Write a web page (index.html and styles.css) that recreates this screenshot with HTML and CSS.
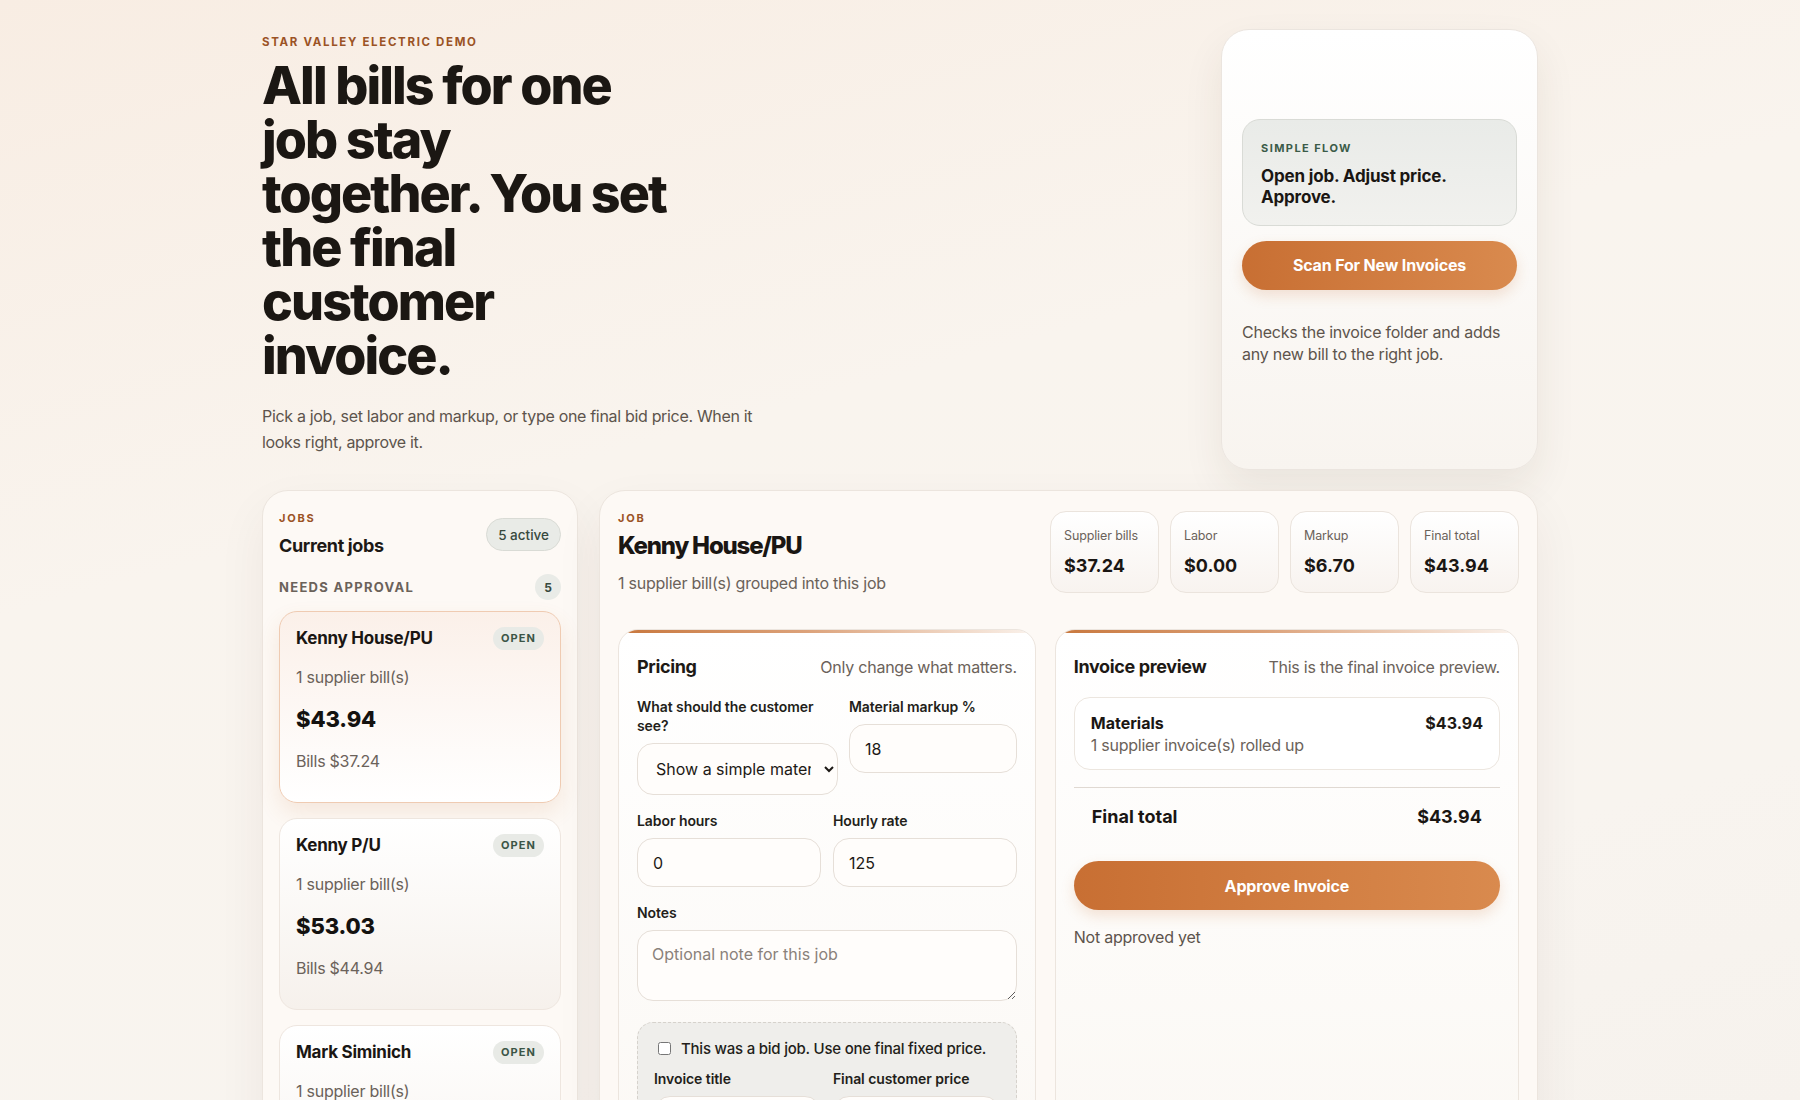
FILE: index.html
```html
<!DOCTYPE html>
<html lang="en">
<head>
<meta charset="utf-8">
<title>Star Valley Electric Demo</title>
<link rel="stylesheet" href="styles.css">
</head>
<body>
<div class="page">
  <header class="hero">
    <div class="hero-copy">
      <div class="kicker">Star Valley Electric Demo</div>
      <h1 class="headline">All bills for one<br>job stay<br>together. You set<br>the final<br>customer<br>invoice.</h1>
      <p class="lead">Pick a job, set labor and markup, or type one final bid price. When it looks right, approve it.</p>
    </div>
    <aside class="flow-card">
      <div class="flow-box">
        <div class="flow-label">Simple flow</div>
        <div class="flow-text">Open job. Adjust price. Approve.</div>
      </div>
      <button class="btn">Scan For New Invoices</button>
      <p class="flow-desc">Checks the invoice folder and adds any new bill to the right job.</p>
    </aside>
  </header>

  <main class="main">
    <section class="panel jobs">
      <div class="jobs-head">
        <div>
          <div class="eyebrow">Jobs</div>
          <div class="panel-title">Current jobs</div>
        </div>
        <span class="pill">5 active</span>
      </div>
      <div class="group-row">
        <span class="group-label">Needs approval</span>
        <span class="count">5</span>
      </div>
      <div class="job-list">
        <div class="job-card selected">
          <div class="job-top"><span class="job-name">Kenny House/PU</span><span class="status">Open</span></div>
          <div class="job-sub">1 supplier bill(s)</div>
          <div class="job-price">$43.94</div>
          <div class="job-sub">Bills $37.24</div>
        </div>
        <div class="job-card">
          <div class="job-top"><span class="job-name">Kenny P/U</span><span class="status">Open</span></div>
          <div class="job-sub">1 supplier bill(s)</div>
          <div class="job-price">$53.03</div>
          <div class="job-sub">Bills $44.94</div>
        </div>
        <div class="job-card">
          <div class="job-top"><span class="job-name">Mark Siminich</span><span class="status">Open</span></div>
          <div class="job-sub">1 supplier bill(s)</div>
          <div class="job-price">$38.10</div>
          <div class="job-sub">Bills $32.29</div>
        </div>
      </div>
    </section>

    <section class="panel detail">
      <div class="detail-head">
        <div>
          <div class="eyebrow">Job</div>
          <h2 class="job-title">Kenny House/PU</h2>
          <div class="job-meta">1 supplier bill(s) grouped into this job</div>
        </div>
        <div class="stats">
          <div class="stat"><div class="stat-label">Supplier bills</div><div class="stat-value">$37.24</div></div>
          <div class="stat"><div class="stat-label">Labor</div><div class="stat-value">$0.00</div></div>
          <div class="stat"><div class="stat-label">Markup</div><div class="stat-value">$6.70</div></div>
          <div class="stat"><div class="stat-label">Final total</div><div class="stat-value">$43.94</div></div>
        </div>
      </div>

      <div class="cards">
        <div class="card">
          <div class="card-head"><span class="card-title">Pricing</span><span class="card-note">Only change what matters.</span></div>
          <div class="row row-first">
            <label class="field-group">
              <span class="field-label">What should the customer see?</span>
              <select class="field select"><option>Show a simple materials line</option></select>
            </label>
            <label class="field-group">
              <span class="field-label">Material markup %</span>
              <input class="field" type="text" value="18">
            </label>
          </div>
          <div class="row row-two">
            <label class="field-group">
              <span class="field-label">Labor hours</span>
              <input class="field" type="text" value="0">
            </label>
            <label class="field-group">
              <span class="field-label">Hourly rate</span>
              <input class="field" type="text" value="125">
            </label>
          </div>
          <label class="field-group notes">
            <span class="field-label">Notes</span>
            <textarea class="field area" placeholder="Optional note for this job"></textarea>
          </label>
          <div class="bid-box">
            <label class="check-row"><input type="checkbox"> <span>This was a bid job. Use one final fixed price.</span></label>
            <div class="row row-two bid-row">
              <label class="field-group">
                <span class="field-label">Invoice title</span>
                <input class="field" type="text">
              </label>
              <label class="field-group">
                <span class="field-label">Final customer price</span>
                <input class="field" type="text">
              </label>
            </div>
          </div>
        </div>

        <div class="card">
          <div class="card-head"><span class="card-title">Invoice preview</span><span class="card-note">This is the final invoice preview.</span></div>
          <div class="line-item">
            <div>
              <div class="line-name">Materials</div>
              <div class="line-sub">1 supplier invoice(s) rolled up</div>
            </div>
            <div class="line-amount">$43.94</div>
          </div>
          <div class="total-row"><span>Final total</span><span>$43.94</span></div>
          <button class="btn approve">Approve Invoice</button>
          <div class="status-note">Not approved yet</div>
        </div>
      </div>
    </section>
  </main>
</div>
</body>
</html>
```

FILE: styles.css
```css
* { box-sizing: border-box; }

html, body { margin: 0; }

body {
  font-family: Inter, "Noto Sans", "Liberation Sans", sans-serif;
  color: #1d1915;
  background: linear-gradient(165deg, #f8ede3 0%, #f9f4ee 35%, #f8f4ef 70%, #f5f1ec 100%);
  min-height: 100vh;
}

.page {
  width: 1276px;
  margin: 0 auto;
  padding: 29px 0 40px;
}

/* HERO */
.hero {
  display: grid;
  grid-template-columns: 1fr 317px;
  gap: 20px;
}

.hero-copy { padding: 6px 0 15px; }

.kicker {
  font-size: 11.5px;
  line-height: 14px;
  font-weight: 700;
  letter-spacing: 0.145em;
  text-transform: uppercase;
  color: #9b5325;
}

.headline {
  margin: 10px 0 0;
  font-size: 52px;
  line-height: 54px;
  font-weight: 800;
  letter-spacing: -0.037em;
  color: #1b1713;
}

.lead {
  margin: 20px 0 0;
  max-width: 530px;
  font-size: 16px;
  line-height: 26px;
  letter-spacing: -0.02em;
  color: #5d544c;
}

.flow-card {
  display: flex;
  flex-direction: column;
  justify-content: center;
  gap: 15px;
  padding: 20px 20px 36px;
  border-radius: 28px;
  border: 1px solid #ebe5df;
  background: linear-gradient(180deg, #ffffff 0%, #f8f4ef 100%);
  box-shadow: 0 18px 40px rgba(70, 45, 20, 0.08);
}

.flow-box {
  padding: 21px 18px 17px;
  border-radius: 18px;
  border: 1px solid #d9dbd6;
  background: linear-gradient(180deg, #e9ebe8 0%, #f1f1ee 100%);
}

.flow-label {
  font-size: 11px;
  line-height: 14px;
  font-weight: 700;
  letter-spacing: 0.13em;
  text-transform: uppercase;
  color: #3b5b48;
}

.flow-text {
  margin-top: 11px;
  font-size: 17px;
  line-height: 21px;
  font-weight: 700;
  letter-spacing: -0.01em;
  color: #1a1613;
}

.btn {
  display: block;
  width: 100%;
  height: 49px;
  border: none;
  border-radius: 999px;
  background: linear-gradient(90deg, #c86f33 0%, #d98a4e 100%);
  color: #fff;
  font-family: inherit;
  font-size: 16px;
  font-weight: 700;
  letter-spacing: -0.01em;
  box-shadow: 0 6px 14px rgba(200, 111, 51, 0.18);
}

.flow-desc {
  margin: 16px 0 0;
  font-size: 16px;
  line-height: 22px;
  letter-spacing: -0.015em;
  color: #5d544c;
}

/* MAIN */
.main {
  display: grid;
  grid-template-columns: 316px 1fr;
  gap: 21px;
  margin-top: 20px;
  align-items: start;
}

.panel {
  border-radius: 26px;
  border: 1px solid #ece5de;
  background: #fdf9f5;
  box-shadow: 0 20px 50px rgba(60, 40, 20, 0.06);
}

.eyebrow {
  font-size: 11px;
  line-height: 14px;
  font-weight: 700;
  letter-spacing: 0.16em;
  text-transform: uppercase;
  color: #9b5325;
}

/* Jobs */
.jobs { padding: 20px 16px 24px; }

.jobs-head {
  display: flex;
  justify-content: space-between;
  align-items: center;
}

.panel-title {
  margin-top: 9px;
  font-size: 18px;
  line-height: 24px;
  font-weight: 700;
  letter-spacing: -0.02em;
}

.pill {
  display: inline-flex;
  align-items: center;
  height: 33px;
  padding: 0 11px;
  border-radius: 999px;
  border: 1px solid #d9dbd5;
  background: #e9ebe7;
  font-size: 13.5px;
  font-weight: 500;
  color: #38493e;
}

.group-row {
  display: flex;
  justify-content: space-between;
  align-items: center;
  margin-top: 16px;
}

.group-label {
  font-size: 13px;
  font-weight: 700;
  letter-spacing: 0.1em;
  text-transform: uppercase;
  color: #6b625a;
}

.count {
  display: inline-flex;
  align-items: center;
  justify-content: center;
  width: 26px;
  height: 26px;
  border-radius: 50%;
  background: #e9ebe7;
  font-size: 12px;
  font-weight: 700;
  color: #38493e;
}

.job-list {
  display: flex;
  flex-direction: column;
  gap: 15px;
  margin-top: 11px;
}

.job-card {
  display: flex;
  flex-direction: column;
  gap: 16px;
  padding: 14px 16px 30px;
  border-radius: 18px;
  border: 1px solid #eee6df;
  background: linear-gradient(180deg, #ffffff 0%, #f6f1ec 100%);
}

.job-card.selected {
  border-color: #efcbb2;
  background: linear-gradient(180deg, #fbf0e9 0%, #ffffff 100%);
  box-shadow: 0 10px 22px rgba(190, 110, 50, 0.12);
}

.job-top {
  display: flex;
  justify-content: space-between;
  align-items: center;
  height: 24px;
}

.job-name {
  font-size: 17px;
  font-weight: 700;
  letter-spacing: -0.015em;
  color: #1a1613;
}

.status {
  display: inline-flex;
  align-items: center;
  height: 23px;
  padding: 0 8px;
  border-radius: 999px;
  background: #e8eae6;
  font-size: 11px;
  font-weight: 700;
  letter-spacing: 0.1em;
  text-transform: uppercase;
  color: #3b5546;
}

.job-sub {
  font-size: 16px;
  line-height: 22px;
  letter-spacing: -0.015em;
  color: #6b625a;
}

.job-price {
  font-size: 22px;
  line-height: 30px;
  font-weight: 800;
  letter-spacing: -0.005em;
  color: #141210;
}

/* Detail */
.detail { padding: 20px 18px 24px; }

.detail-head {
  display: flex;
  justify-content: space-between;
  align-items: flex-start;
}

.job-title {
  margin: 6px 0 0;
  font-size: 24px;
  line-height: 30px;
  font-weight: 800;
  letter-spacing: -0.05em;
  color: #1a1613;
}

.job-meta {
  margin-top: 11px;
  font-size: 16px;
  line-height: 22px;
  letter-spacing: -0.015em;
  color: #6b625a;
}

.stats {
  display: grid;
  grid-template-columns: repeat(4, 109px);
  gap: 11px;
}

.stat {
  padding: 16px 13px 14px;
  border-radius: 16px;
  border: 1px solid #ebe4dd;
  background: linear-gradient(180deg, #ffffff 0%, #f8f3ef 100%);
}

.stat-label {
  font-size: 12.5px;
  line-height: 16px;
  letter-spacing: -0.01em;
  white-space: nowrap;
  color: #6b625a;
}

.stat-value {
  margin-top: 10px;
  font-size: 18px;
  line-height: 24px;
  font-weight: 700;
  color: #1a1613;
}

.cards {
  display: grid;
  grid-template-columns: 0.9fr 1fr;
  gap: 19px;
  margin-top: 35px;
  align-items: start;
}

.card {
  position: relative;
  overflow: hidden;
  padding: 25px 18px 24px;
  border-radius: 20px;
  border: 1px solid #ece5de;
  background: linear-gradient(180deg, #ffffff 0%, #fbf8f4 100%);
  min-height: 520px;
}

.card::before {
  content: "";
  position: absolute;
  top: 0;
  left: 0;
  right: 0;
  height: 3px;
  background: linear-gradient(90deg, #c8773d 0%, #dca27a 45%, rgba(240, 215, 195, 0.3) 100%);
}

.card-head {
  display: flex;
  justify-content: space-between;
  align-items: baseline;
}

.card-title {
  font-size: 18px;
  line-height: 24px;
  font-weight: 700;
  letter-spacing: -0.02em;
}

.card-note {
  font-size: 16px;
  letter-spacing: -0.015em;
  color: #6b625a;
}

.row {
  display: grid;
  gap: 12px;
  margin-top: 16px;
  align-items: start;
}

.row-first {
  grid-template-columns: 201px 1fr;
  gap: 11px;
  margin-top: 18px;
}

.row-two { grid-template-columns: 1fr 1fr; }

.field-group {
  display: flex;
  flex-direction: column;
  gap: 8px;
}

.notes { margin-top: 16px; }

.field-label {
  font-size: 14px;
  line-height: 19px;
  font-weight: 600;
  letter-spacing: -0.005em;
  color: #231e1a;
}

.field {
  width: 100%;
  height: 49px;
  padding: 0 15px;
  border-radius: 16px;
  border: 1px solid #e6dfd8;
  background: #fffdfb;
  font-family: inherit;
  font-size: 16px;
  color: #1d1915;
}

.select {
  height: 52px;
  padding: 0 10px 0 14px;
}

.area {
  height: 71px;
  padding: 13px 14px;
  resize: vertical;
}

.area::placeholder { color: #8a817a; }

.bid-box {
  margin-top: 21px;
  padding: 15px 16px 18px;
  border-radius: 16px;
  border: 1px dashed #d6d2cc;
  background: #efeeeb;
}

.check-row {
  display: flex;
  align-items: center;
  gap: 10px;
  height: 20px;
  padding-left: 4px;
  font-size: 15px;
  font-weight: 500;
  letter-spacing: -0.015em;
  color: #231e1a;
}

.check-row input { margin: 0; width: 13px; height: 13px; }

.bid-row { margin-top: 11px; }

.line-item {
  display: flex;
  justify-content: space-between;
  align-items: flex-start;
  margin-top: 18px;
  padding: 15px 16px 13px;
  border-radius: 16px;
  border: 1px solid #ece6df;
  background: #ffffff;
}

.line-name {
  font-size: 16px;
  line-height: 20px;
  font-weight: 700;
  color: #1a1613;
}

.line-sub {
  margin-top: 1px;
  font-size: 16px;
  line-height: 22px;
  letter-spacing: -0.015em;
  color: #6b625a;
}

.line-amount {
  font-size: 16px;
  line-height: 20px;
  font-weight: 700;
}

.total-row {
  display: flex;
  justify-content: space-between;
  margin-top: 17px;
  padding: 17px 18px 16px;
  border-top: 1px solid #e0d9d2;
  font-size: 18px;
  line-height: 24px;
  font-weight: 700;
  color: #1a1613;
}

.approve { margin-top: 16px; }

.status-note {
  margin-top: 16px;
  font-size: 16px;
  line-height: 22px;
  letter-spacing: -0.015em;
  color: #5d544c;
}
```
